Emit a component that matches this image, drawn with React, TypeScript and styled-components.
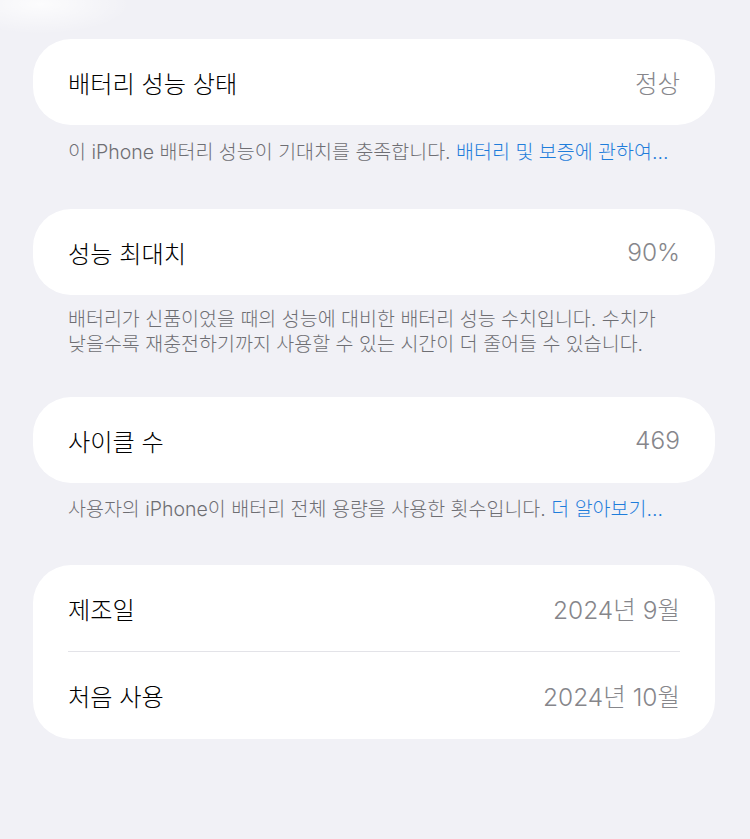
import styled, { createGlobalStyle } from 'styled-components';

const GlobalStyle = createGlobalStyle`
  body {
    margin: 0;
    background: #f1f1f6;
    font-family: Inter, 'Noto Sans CJK KR', sans-serif;
    -webkit-font-smoothing: antialiased;
  }
`;

const Page = styled.main`
  min-height: 839px;
  box-sizing: border-box;
  padding: 39px 35px 0 33px;
  background: radial-gradient(ellipse 90px 30px at 40px 4px, rgba(255, 255, 255, 0.8), rgba(255, 255, 255, 0));
`;

const Section = styled.section<{ $gap?: number }>`
  margin-bottom: ${(p) => p.$gap ?? 43}px;
`;

const Card = styled.div`
  background: #fff;
  border-radius: 38px;
  overflow: hidden;
`;

const Row = styled.div`
  height: 86px;
  display: flex;
  align-items: center;
  justify-content: space-between;
  padding: 0 35px;
  & + & {
    height: 87px;
    border-top: 1.5px solid #e3e3e8;
    margin: 0 35px;
    padding: 0;
  }
`;

const Label = styled.span`
  font-size: 24.2px;
  font-weight: 300;
  color: #000;
`;

const Value = styled.span`
  font-size: 24.5px;
  font-weight: 300;
  color: #86868b;
`;

const Footer = styled.p<{ $top?: number }>`
  margin: ${(p) => p.$top ?? 14}px 0 0;
  padding: 0 35px;
  font-size: 19.5px;
  font-weight: 300;
  line-height: 25px;
  color: #6e6e73;
  word-break: keep-all;
`;

const Link = styled.a`
  color: #1f7ddb;
  text-decoration: none;
`;

type Item = { label: string; value: string };

const Group = ({ items }: { items: Item[] }) => (
  <Card>
    {items.map((it) => (
      <Row key={it.label}>
        <Label>{it.label}</Label>
        <Value>{it.value}</Value>
      </Row>
    ))}
  </Card>
);

const App = () => (
  <>
    <GlobalStyle />
    <Page>
      <Section $gap={44}>
        <Group items={[{ label: '배터리 성능 상태', value: '정상' }]} />
        <Footer $top={15}>
          이 iPhone 배터리 성능이 기대치를 충족합니다. <Link>배터리 및 보증에 관하여...</Link>
        </Footer>
      </Section>
      <Section $gap={40}>
        <Group items={[{ label: '성능 최대치', value: '90%' }]} />
        <Footer $top={12}>
          배터리가 신품이었을 때의 성능에 대비한 배터리 성능 수치입니다. 수치가 낮을수록
          재충전하기까지 사용할 수 있는 시간이 더 줄어들 수 있습니다.
        </Footer>
      </Section>
      <Section>
        <Group items={[{ label: '사이클 수', value: '469' }]} />
        <Footer>
          사용자의 iPhone이 배터리 전체 용량을 사용한 횟수입니다. <Link>더 알아보기...</Link>
        </Footer>
      </Section>
      <Section>
        <Group
          items={[
            { label: '제조일', value: '2024년 9월' },
            { label: '처음 사용', value: '2024년 10월' },
          ]}
        />
      </Section>
    </Page>
  </>
);

export default App;
